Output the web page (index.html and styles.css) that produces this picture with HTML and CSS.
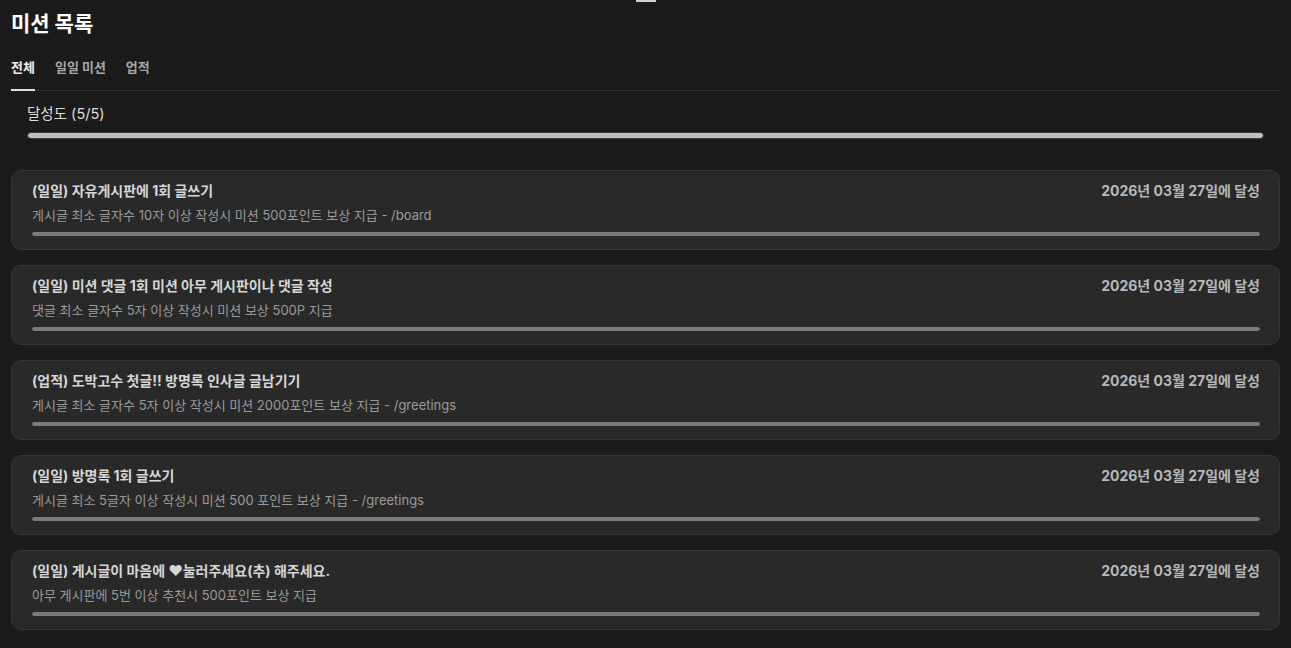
FILE: index.html
```html
<!DOCTYPE html>
<html>
<head>
  <title>미션 목록</title>
  <meta charset="UTF-8">
  <link rel="stylesheet" href="styles.css">
</head>
<body>
  <div class="handle"></div>
  <div class="page">
    <h2 class="page-title">미션 목록</h2>

    <div class="tabs">
      <button class="tab active">전체</button>
      <button class="tab">일일 미션</button>
      <button class="tab">업적</button>
    </div>

    <div class="summary">
      <div class="summary-label">달성도 (5/5)</div>
      <div class="summary-bar"><div class="summary-fill" style="width: 100%;"></div></div>
    </div>

    <div class="mission-list">
      <div class="mission">
        <div class="mission-head">
          <span class="mission-title">(일일) 자유게시판에 1회 글쓰기</span>
          <span class="mission-date">2026년 03월 27일에 달성</span>
        </div>
        <div class="mission-desc">게시글 최소 글자수 10자 이상 작성시 미션 500포인트 보상 지급 - /board</div>
        <div class="mission-bar"><div class="mission-fill" style="width: 100%;"></div></div>
      </div>

      <div class="mission">
        <div class="mission-head">
          <span class="mission-title">(일일) 미션 댓글 1회 미션 아무 게시판이나 댓글 작성</span>
          <span class="mission-date">2026년 03월 27일에 달성</span>
        </div>
        <div class="mission-desc">댓글 최소 글자수 5자 이상 작성시 미션 보상 500P 지급</div>
        <div class="mission-bar"><div class="mission-fill" style="width: 100%;"></div></div>
      </div>

      <div class="mission">
        <div class="mission-head">
          <span class="mission-title">(업적) 도박고수 첫글!! 방명록 인사글 글남기기</span>
          <span class="mission-date">2026년 03월 27일에 달성</span>
        </div>
        <div class="mission-desc">게시글 최소 글자수 5자 이상 작성시 미션 2000포인트 보상 지급 - /greetings</div>
        <div class="mission-bar"><div class="mission-fill" style="width: 100%;"></div></div>
      </div>

      <div class="mission">
        <div class="mission-head">
          <span class="mission-title">(일일) 방명록 1회 글쓰기</span>
          <span class="mission-date">2026년 03월 27일에 달성</span>
        </div>
        <div class="mission-desc">게시글 최소 5글자 이상 작성시 미션 500 포인트 보상 지급 - /greetings</div>
        <div class="mission-bar"><div class="mission-fill" style="width: 100%;"></div></div>
      </div>

      <div class="mission">
        <div class="mission-head">
          <span class="mission-title">(일일) 게시글이 마음에 ♥눌러주세요(추) 해주세요.</span>
          <span class="mission-date">2026년 03월 27일에 달성</span>
        </div>
        <div class="mission-desc">아무 게시판에 5번 이상 추천시 500포인트 보상 지급</div>
        <div class="mission-bar"><div class="mission-fill" style="width: 100%;"></div></div>
      </div>
    </div>
  </div>
</body>
</html>
```

FILE: styles.css
```css
body {
  font-family: Inter, "Noto Sans CJK KR", sans-serif;
  margin: 0;
  background-color: #1b1b1b;
  color: #e0e0e0;
  box-sizing: border-box;
}

/* little drag handle at the very top */
.handle {
  width: 20px;
  height: 2px;
  margin: 0 auto;
  background-color: #d0d0d0;
}

.page {
  padding: 0 11px;
}

.page-title {
  margin: 0;
  padding-top: 8px;
  font-size: 21px;
  font-weight: 700;
  line-height: 28px;
  color: #ffffff;
}

.tabs {
  display: flex;
  gap: 20px;
  margin-top: 20px;
  border-bottom: 1px solid #333;
}
.tab {
  background: none;
  border: none;
  padding: 0 0 13px;
  font-family: inherit;
  font-size: 13px;
  font-weight: 700;
  line-height: 18px;
  color: #a8a8a8;
  cursor: pointer;
  border-bottom: 2px solid transparent;
  margin-bottom: -1px;
}
.tab.active {
  color: #eeeeee;
  border-bottom-color: #e0e0e0;
}

.summary {
  padding: 13px 16px 0 16px;
}
.summary-label {
  font-size: 14.5px;
  line-height: 20px;
  color: #dcdcdc;
}
.summary-bar {
  margin-top: 8px;
  height: 7px;
  border: 1px solid #3c3c3c;
  border-radius: 4px;
  background-color: #2b2b2b;
  box-sizing: border-box;
  overflow: hidden;
}
.summary-fill {
  height: 100%;
  background-color: #c0c0c0;
  border-radius: 4px;
}

.mission-list {
  display: flex;
  flex-direction: column;
  gap: 15px;
  margin-top: 31px;
}

.mission {
  background-color: #292929;
  border: 1px solid #363636;
  border-radius: 10px;
  padding: 11px 19px 13px 20px;
}
.mission-head {
  display: flex;
  justify-content: space-between;
  align-items: center;
}
.mission-title {
  font-size: 14px;
  font-weight: 700;
  line-height: 18px;
  color: #d6d6d6;
}
.mission-date {
  font-size: 14px;
  font-weight: 700;
  line-height: 18px;
  color: #b8b8b8;
}
.mission-desc {
  margin-top: 6px;
  font-size: 13px;
  line-height: 18px;
  color: #9a9a9a;
}
.mission-bar {
  margin-top: 8px;
  height: 4px;
  border-radius: 2px;
  background-color: #3a3a3a;
  overflow: hidden;
}
.mission-fill {
  height: 100%;
  background-color: #7a7a7a;
  border-radius: 2px;
}
```
